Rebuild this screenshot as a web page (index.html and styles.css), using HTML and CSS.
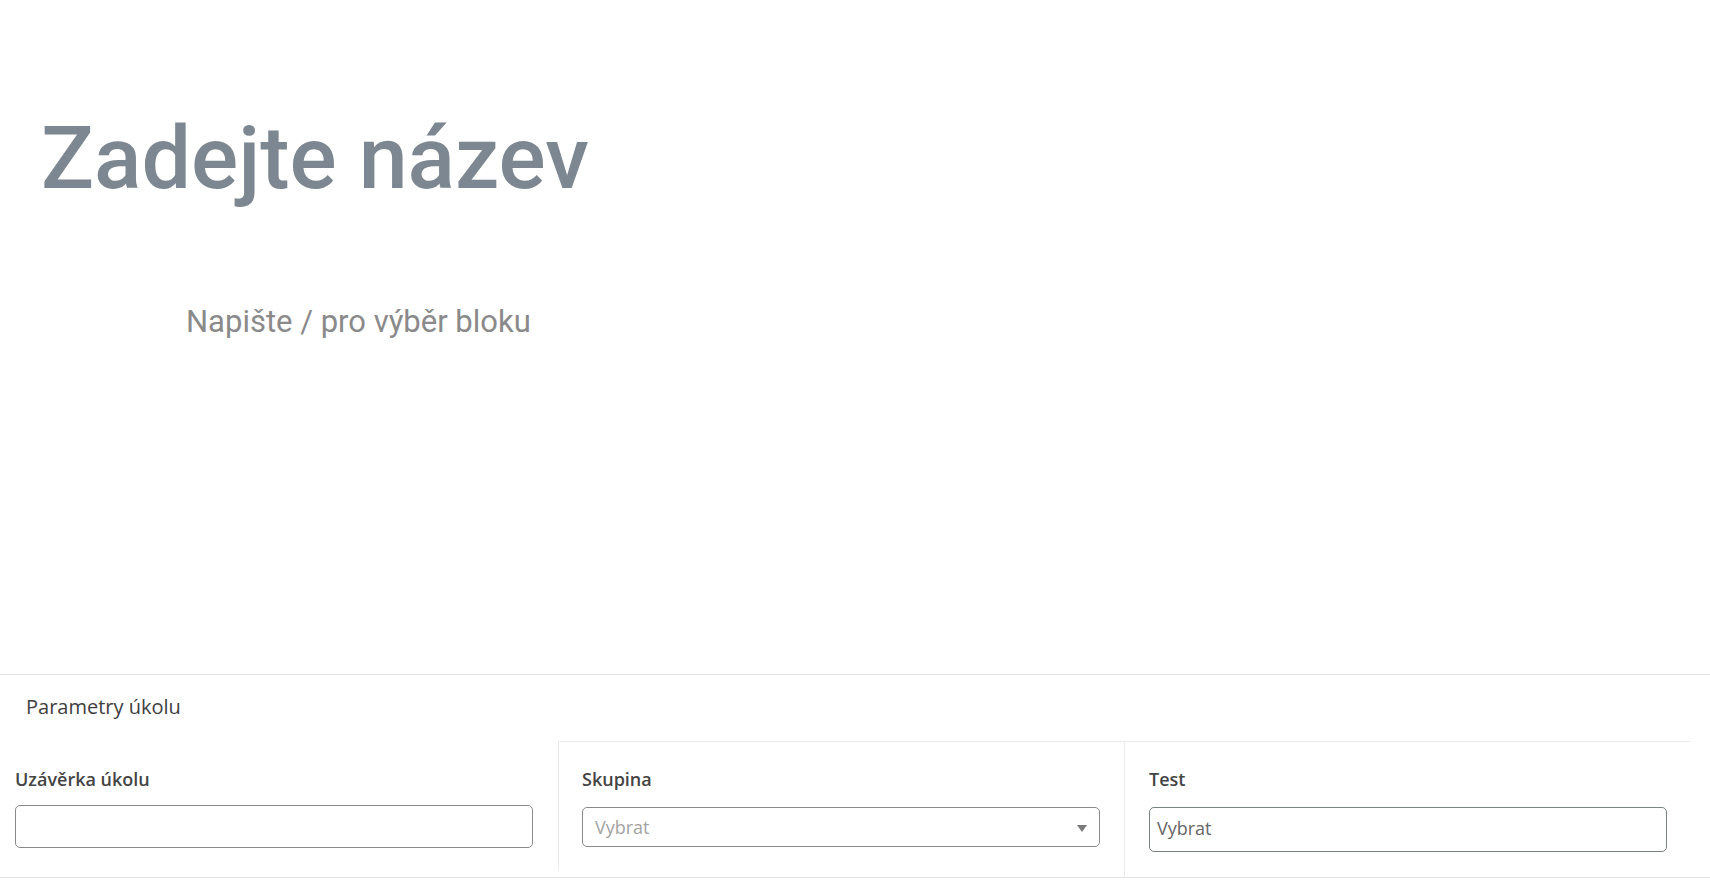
FILE: index.html
```html
<!DOCTYPE html>
<html lang="cs">
<head>
  <meta charset="UTF-8" />
  <title>Zadejte název</title>
  <link rel="stylesheet" href="styles.css">
</head>
<body>
  <div class="editor">
    <h1 class="doc-title">Zadejte název</h1>
    <p class="block-hint">Napište / pro výběr bloku</p>
  </div>

  <!-- parametry -->
  <div class="params">
    <div class="params-title">Parametry úkolu</div>
    <div class="fields">
      <div class="field first">
        <label>Uzávěrka úkolu</label>
        <input type="text" class="input deadline" />
      </div>
      <div class="field boxed group">
        <label>Skupina</label>
        <div class="select">
          <span class="select-placeholder">Vybrat</span>
          <svg class="caret" width="10" height="7" viewBox="0 0 10 7"><path d="M0 0 L10 0 L5 7 Z" fill="#7a7a7a"/></svg>
        </div>
      </div>
      <div class="field boxed test">
        <label>Test</label>
        <input type="text" class="input picker" placeholder="Vybrat" />
      </div>
    </div>
  </div>
</body>
</html>
```

FILE: styles.css
```css
* {
  box-sizing: border-box;
}

body {
  margin: 0;
  padding: 0;
  background: #fff;
  font-family: 'Open Sans', sans-serif;
}

.editor {
  height: 674px;
  padding: 104px 0 0 41px;
}

.doc-title {
  font-family: Roboto, sans-serif;
  font-size: 88px;
  font-weight: 500;
  line-height: 108px;
  color: #7d8791;
  margin: 0;
}

.block-hint {
  font-family: Roboto, sans-serif;
  font-size: 31px;
  font-weight: 400;
  line-height: 36px;
  color: #8a8a8a;
  margin: 92px 0 0 145px;
}

.params {
  border-top: 1px solid #e3e3e3;
  border-bottom: 1px solid #e3e3e3;
}

.params-title {
  font-size: 20px;
  line-height: 28px;
  color: #404040;
  padding: 18px 0 0 26px;
  margin-bottom: 20px;
}

.fields {
  display: flex;
  align-items: flex-start;
}

.field label {
  display: block;
  font-size: 18px;
  font-weight: 600;
  line-height: 24px;
  color: #444;
}

.field.first {
  width: 558px;
  padding: 26px 25px 0 15px;
}

.field.boxed {
  border-top: 1px solid #ebebeb;
  border-left: 1px solid #ebebeb;
  padding: 25px 24px 23px 23px;
}

.field.group {
  width: 566px;
}

.field.test {
  width: 567px;
  padding: 25px 24px 25px 24px;
}

.input {
  display: block;
  width: 100%;
  border: 1px solid #8a8a8a;
  border-radius: 5px;
  font-family: 'Open Sans', sans-serif;
  font-size: 18px;
  padding: 0 7px;
  outline: none;
}

.input.deadline {
  height: 43px;
  margin-top: 14px;
}

.input.picker {
  height: 45px;
  margin-top: 16px;
  padding-bottom: 3px;
  border-color: #7b8282;
}

.input.picker::placeholder {
  color: #666;
}

.select {
  display: flex;
  align-items: center;
  justify-content: space-between;
  height: 40px;
  margin-top: 16px;
  padding: 0 12px 0 12px;
  border: 1px solid #8a8a8a;
  border-radius: 5px;
}

.select-placeholder {
  font-size: 18px;
  color: #a3a3a3;
}

.caret {
  margin-top: 2px;
}
```
